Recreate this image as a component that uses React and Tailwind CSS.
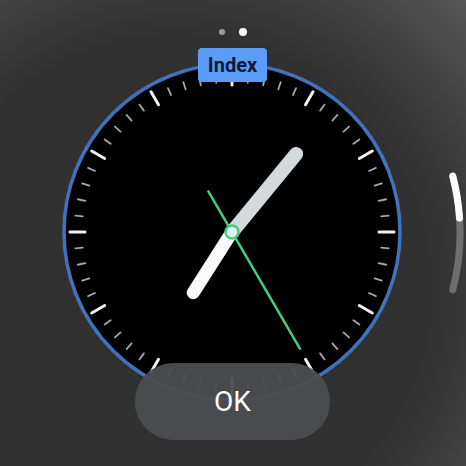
import React from "react";

const C = 172;

function polar(angleDeg, r) {
  const a = ((angleDeg - 90) * Math.PI) / 180;
  return [C + r * Math.cos(a), C + r * Math.sin(a)];
}

function Ticks() {
  const items = [];
  for (let i = 0; i < 60; i++) {
    const major = i % 5 === 0;
    const ang = i * 6;
    const [x1, y1] = polar(ang, major ? 147 : 150);
    const [x2, y2] = polar(ang, major ? 162 : 157.5);
    items.push(
      <line
        key={i}
        x1={x1}
        y1={y1}
        x2={x2}
        y2={y2}
        stroke={major ? "#f2f2f2" : "#a8a8a8"}
        strokeWidth={major ? 3 : 1.8}
        strokeLinecap="round"
      />
    );
  }
  return <g>{items}</g>;
}

function Clock() {
  const [mx, my] = polar(39.4, 101);
  const [hx, hy] = polar(212.6, 72);
  const [sx1, sy1] = polar(149.8 + 180, 47);
  const [sx2, sy2] = polar(149.8, 135);
  return (
    <svg width="344" height="344" viewBox="0 0 344 344">
      <circle cx={C} cy={C} r={168} fill="#000" stroke="#4173bd" strokeWidth="3.5" />
      <Ticks />
      <line x1={C} y1={C} x2={hx} y2={hy} stroke="#fafafa" strokeWidth="13" strokeLinecap="round" />
      <line x1={C} y1={C} x2={mx} y2={my} stroke="#d4d9dc" strokeWidth="14" strokeLinecap="round" />
      <line x1={sx1} y1={sy1} x2={sx2} y2={sy2} stroke="#3fd07c" strokeWidth="2.5" strokeLinecap="round" />
      <circle cx={C} cy={C} r="6.5" fill="#e8ecee" stroke="#3fd07c" strokeWidth="2.5" />
    </svg>
  );
}

function ScrollIndicator() {
  const cx = 233, cy = 233, r = 227;
  const pt = (deg) => {
    const a = (deg * Math.PI) / 180;
    return [cx + r * Math.cos(a), cy + r * Math.sin(a)];
  };
  const [ax, ay] = pt(-14.5);
  const [bx, by] = pt(-3.8);
  const [ex, ey] = pt(14.5);
  return (
    <svg className="absolute left-0 top-0" width="466" height="466" viewBox="0 0 466 466">
      <path d={`M ${ax} ${ay} A ${r} ${r} 0 0 1 ${ex} ${ey}`} fill="none" stroke="#6e6e6e" strokeWidth="7" strokeLinecap="round" />
      <path d={`M ${ax} ${ay} A ${r} ${r} 0 0 1 ${bx} ${by}`} fill="none" stroke="#ffffff" strokeWidth="7" strokeLinecap="round" />
    </svg>
  );
}

export default function App() {
  return (
    <div
      className="relative w-[466px] h-[466px] overflow-hidden flex flex-col items-center bg-[#313131] bg-[radial-gradient(circle_at_38%_62%,#303030_0px,#313131_250px,#3a3a3a_300px,#5a5a5a_420px)]"
      style={{ fontFamily: "Roboto, 'Noto Sans', sans-serif" }}
    >
      <ScrollIndicator />
      <div className="flex items-center gap-[14px] mt-[28px] h-[8px]">
        <div className="w-[6px] h-[6px] rounded-full bg-[#9a9a9a]" />
        <div className="w-[8px] h-[8px] rounded-full bg-white" />
      </div>
      <div className="relative mt-[24px] w-[344px] h-[344px] -ml-[2px]">
        <Clock />
        <div className="absolute left-[138px] top-[-12px] w-[69px] h-[34px] rounded-[4px] bg-[#5b9cf6] flex items-center justify-center text-[20px] font-bold text-[#0b1a33] leading-none">
          Index
        </div>
      </div>
      <div className="absolute left-[135px] top-[363px] w-[195px] h-[77px] rounded-[38px] bg-[#4b4d50]/95 flex items-center justify-center text-white text-[28px] leading-none">
        OK
      </div>
    </div>
  );
}
